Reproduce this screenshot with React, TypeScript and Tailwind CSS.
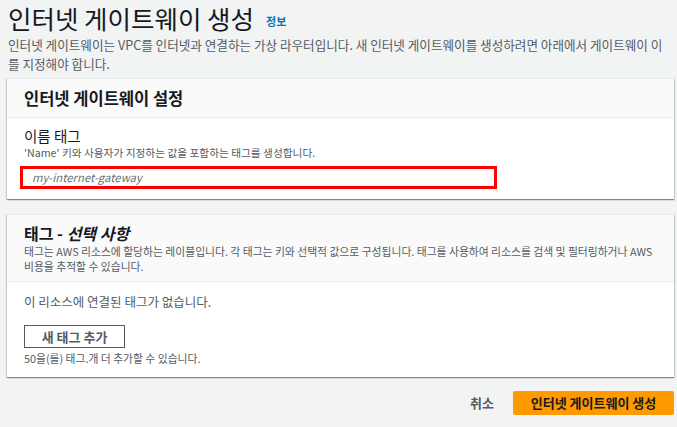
const App = () => {
    const font = { fontFamily: '"Noto Sans CJK KR", "Noto Sans", sans-serif' }
    return (
        <div style={font} className="w-[677px] h-[427px] overflow-hidden bg-[#f2f3f3] text-[#16191f]">
            <div className="pl-[8px]">
                <div className="flex items-end gap-[12px]">
                    <h1 className="text-[25.5px] leading-[35px] font-normal text-[#16191f]">인터넷 게이트웨이 생성</h1>
                    <a className="text-[11px] font-bold text-[#0073bb] mb-[6px]">정보</a>
                </div>
                <p className="text-[12.6px] leading-[19px] text-[#545b64] whitespace-nowrap">
                    인터넷 게이트웨이는 VPC를 인터넷과 연결하는 가상 라우터입니다. 새 인터넷 게이트웨이를 생성하려면 아래에서 게이트웨이 이<br />를 지정해야 합니다.
                </p>
            </div>

            <div className="ml-[7px] mr-[3px] mt-[5px] bg-white shadow-[0_1px_1px_0_rgba(0,28,36,0.3),1px_1px_1px_0_rgba(0,28,36,0.15),-1px_1px_1px_0_rgba(0,28,36,0.15)] border-t border-[#eaeded]">
                <div className="bg-[#fafafa] border-b border-[#eaeded] px-[17px] h-[39px] flex items-center">
                    <h2 className="text-[16.5px] font-bold">인터넷 게이트웨이 설정</h2>
                </div>
                <div className="px-[17px] pt-[8px] pb-[10px]">
                    <div className="text-[14.5px] leading-[19px]">이름 태그</div>
                    <div className="text-[10.7px] leading-[16px] text-[#545b64]">'Name' 키와 사용자가 지정하는 값을 포함하는 태그를 생성합니다.</div>
                    <div className="mt-[5px] -ml-[4px] w-[477px] h-[23px] border-[3px] border-[#ff0000] flex items-center pl-[9px]">
                        <span className="text-[11.3px] italic text-[#687078]">my-internet-gateway</span>
                    </div>
                </div>
            </div>

            <div className="ml-[7px] mr-[3px] mt-[15px] bg-white shadow-[0_1px_1px_0_rgba(0,28,36,0.3),1px_1px_1px_0_rgba(0,28,36,0.15),-1px_1px_1px_0_rgba(0,28,36,0.15)] border-t border-[#eaeded]">
                <div className="bg-[#fafafa] border-b border-[#eaeded] px-[17px] pt-[7px] pb-[7px]">
                    <h2 className="text-[16px] leading-[22px] font-bold">태그 - <i>선택 사항</i></h2>
                    <p className="text-[10.8px] leading-[15px] text-[#545b64] whitespace-nowrap">
                        태그는 AWS 리소스에 할당하는 레이블입니다. 각 태그는 키와 선택적 값으로 구성됩니다. 태그를 사용하여 리소스를 검색 및 필터링하거나 AWS<br />비용을 추적할 수 있습니다.
                    </p>
                </div>
                <div className="px-[17px] pt-[11px] pb-[11px]">
                    <div className="text-[12.5px] leading-[18px] text-[#545b64]">이 리소스에 연결된 태그가 없습니다.</div>
                    <button className="mt-[14px] w-[101px] h-[23px] border border-[#545b64] bg-white text-[13px] font-bold text-[#545b64] flex items-center justify-center">새 태그 추가</button>
                    <div className="mt-[2px] text-[10.8px] leading-[16px] text-[#545b64]">50을(를) 태그.개 더 추가할 수 있습니다.</div>
                </div>
            </div>

            <div className="flex justify-end items-center gap-[19px] mr-[3px] mt-[14px]">
                <span className="text-[13px] font-bold text-[#545b64]">취소</span>
                <button className="w-[161px] h-[24px] bg-[#ff9900] rounded-[2px] text-[13px] font-bold text-[#16191f] flex items-center justify-center">인터넷 게이트웨이 생성</button>
            </div>
        </div>
    )
}

export default App
